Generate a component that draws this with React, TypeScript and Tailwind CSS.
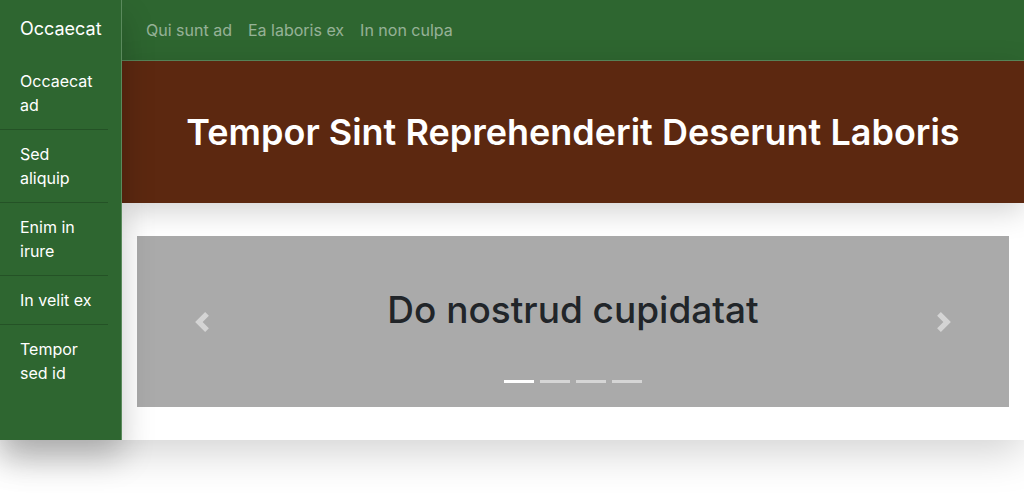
import React from 'react';

const sideItems = [
    ["Occaecat", "ad"],
    ["Sed", "aliquip"],
    ["Enim in", "irure"],
    ["In velit ex"],
    ["Tempor", "sed id"],
];

const navLinks = ["Qui sunt ad", "Ea laboris ex", "In non culpa"];

const Chevron = ({ dir }: { dir: "left" | "right" }) => (
    <svg viewBox="0 0 8 8" className="w-5 h-5" fill="#fff">
        {dir === "left"
            ? <path d="M5.25 0l-4 4 4 4 1.5-1.5L4.25 4l2.5-2.5L5.25 0z" />
            : <path d="M2.75 0l-1.5 1.5L3.75 4l-2.5 2.5L2.75 8l4-4-4-4z" />}
    </svg>
);

const Sidebar = () => {
    return (
        <div className="relative z-20 flex flex-col w-[122px] shrink-0 bg-[#2e6630] border-r border-[#5a8a5c] shadow-[0_18px_30px_rgba(0,0,0,0.22)]">
            <div className="h-[57px] flex items-center pl-5 text-[18px] text-white">
                Occaecat
            </div>
            <ul className="w-[108px]">
                {sideItems.map((lines, i) => (
                    <li key={i} className="py-3 pl-5 text-white text-[16px] leading-6 border-b border-[#245226] last:border-b-0">
                        {lines.map((l) => <div key={l}>{l}</div>)}
                    </li>
                ))}
            </ul>
        </div>
    )
}

const Carousel = () => {
    return (
        <div className="relative bg-[#aaaaaa] h-[171px] flex flex-col items-center">
            <h2 className="mt-[52px] text-[37px] leading-[44px] font-medium text-[#212529]">
                Do nostrud cupidatat
            </h2>
            <div className="absolute left-0 top-0 h-full w-[15%] flex items-center justify-center opacity-50">
                <Chevron dir="left" />
            </div>
            <div className="absolute right-0 top-0 h-full w-[15%] flex items-center justify-center opacity-50">
                <Chevron dir="right" />
            </div>
            <div className="absolute bottom-[24px] flex gap-[6px]">
                <span className="block w-[30px] h-[3px] bg-white" />
                <span className="block w-[30px] h-[3px] bg-white/50" />
                <span className="block w-[30px] h-[3px] bg-white/50" />
                <span className="block w-[30px] h-[3px] bg-white/50" />
            </div>
        </div>
    )
}

export default function App() {
    return (
        <div className="w-[1024px] h-[493px] bg-white font-[Inter,'Liberation_Sans',sans-serif]">
            <div className="flex h-[440px] shadow-[0_12px_40px_rgba(0,0,0,0.18)]">
                <Sidebar />
                <div className="flex flex-col flex-1 min-w-0">
                    <nav className="h-[61px] shrink-0 flex items-center pl-4 bg-[#2e6630] border-b border-[#5a8a5c]">
                        {navLinks.map((l) => (
                            <a key={l} className="px-2 text-[16px] text-white/50">{l}</a>
                        ))}
                    </nav>
                    <header className="relative z-10 h-[142px] shrink-0 flex items-center justify-center bg-[#5c2810] shadow-[0_8px_28px_rgba(0,0,0,0.18)]">
                        <h1 className="text-[36px] font-semibold text-white">
                            Tempor Sint Reprehenderit Deserunt Laboris
                        </h1>
                    </header>
                    <div className="flex-1 bg-white pt-[33px] px-[15px]">
                        <Carousel />
                    </div>
                </div>
            </div>
        </div>
    )
}
